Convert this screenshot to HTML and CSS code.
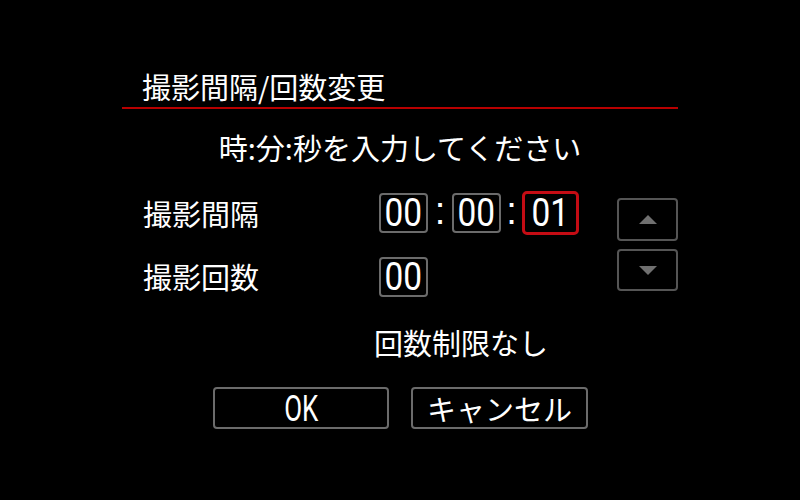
FILE: index.html
```html
<!DOCTYPE html>
<html lang="ja">
<head>
<meta charset="utf-8">
<title>撮影間隔/回数変更</title>
<link rel="stylesheet" href="styles.css">
</head>
<body>
<div class="screen">
  <div class="panel">
    <div class="title">撮影間隔/回数変更</div>
    <div class="prompt">時:分:秒を入力してください</div>
    <div class="form">
      <div class="label row1">撮影間隔</div>
      <div class="fields row1">
        <span class="box"><span class="num">00</span></span>
        <span class="colon c1">:</span>
        <span class="box"><span class="num">00</span></span>
        <span class="colon c2">:</span>
        <span class="box active"><span class="num">01</span></span>
      </div>
      <div class="arrows">
        <div class="arrow up">
          <svg width="18" height="9" viewBox="0 0 18 9"><polygon points="9,0 18,9 0,9" fill="#707070"/></svg>
        </div>
        <div class="arrow down">
          <svg width="18" height="9" viewBox="0 0 18 9"><polygon points="0,0 18,0 9,9" fill="#707070"/></svg>
        </div>
      </div>
      <div class="label row2">撮影回数</div>
      <div class="fields row2">
        <span class="box"><span class="num">00</span></span>
      </div>
    </div>
    <div class="nolimit">回数制限なし</div>
    <div class="buttons">
      <div class="btn ok"><span class="oktext">OK</span></div>
      <div class="btn cancel">キャンセル</div>
    </div>
  </div>
</div>
</body>
</html>
```

FILE: styles.css
```css
html, body {
  margin: 0;
  padding: 0;
  background: #000;
}

.screen {
  width: 800px;
  height: 500px;
  background: #000;
  color: #fff;
  font-family: "Noto Sans CJK JP", "Noto Sans", sans-serif;
  font-size: 29px;
  overflow: hidden;
}

.panel {
  margin-left: 122px;
  width: 556px;
  padding-top: 66px;
}

.title {
  height: 41px;
  line-height: 41px;
  padding-left: 20px;
  border-bottom: 2px solid #b80000;
  white-space: nowrap;
}

.prompt {
  margin-top: 18px;
  height: 40px;
  line-height: 40px;
  text-align: center;
  white-space: nowrap;
}

.form {
  margin-top: 23px;
  padding-left: 21px;
  display: grid;
  grid-template-columns: 236px 238px 61px;
  grid-template-rows: 46px 41px;
  row-gap: 20px;
}

.label {
  grid-column: 1;
  display: flex;
  align-items: center;
  line-height: 1;
  white-space: nowrap;
}

.label.row1 { grid-row: 1; }
.label.row2 { grid-row: 2; }

.fields {
  grid-column: 2;
  display: flex;
  align-items: center;
}

.fields.row1 { grid-row: 1; }
.fields.row2 { grid-row: 2; }

.box {
  box-sizing: border-box;
  width: 49px;
  height: 40px;
  border: 2px solid #6b6b6b;
  border-radius: 4px;
  display: flex;
  align-items: center;
  justify-content: center;
}

.box.active {
  width: 57px;
  height: 44px;
  border: 3px solid #c40c14;
  border-radius: 5px;
}

.num {
  display: inline-block;
  font-family: Roboto, "Liberation Sans", sans-serif;
  font-weight: 400;
  font-size: 38px;
  line-height: 1;
  transform: scaleX(0.88);
}

.colon {
  display: flex;
  justify-content: center;
  font-family: "Liberation Sans", Arial, sans-serif;
  font-size: 38px;
  line-height: 1;
  padding-bottom: 4px;
}

.colon.c1 { width: 24px; }
.colon.c2 { width: 21px; }

.arrows {
  grid-column: 3;
  grid-row: 1 / span 2;
  padding-top: 8px;
  display: flex;
  flex-direction: column;
  gap: 8px;
}

.arrow {
  box-sizing: border-box;
  width: 61px;
  height: 43px;
  border: 2px solid #555;
  border-radius: 4px;
  display: flex;
  align-items: center;
  justify-content: center;
}

.arrow.down {
  height: 42px;
}

.arrow svg {
  display: block;
}

.nolimit {
  margin-top: 25px;
  height: 40px;
  line-height: 40px;
  padding-left: 252px;
  white-space: nowrap;
}

.buttons {
  margin-top: 25px;
  display: flex;
  justify-content: center;
  gap: 22px;
  padding-left: 1px;
}

.btn {
  box-sizing: border-box;
  height: 42px;
  border: 2px solid #6b6b6b;
  border-radius: 4px;
  display: flex;
  align-items: center;
  justify-content: center;
  line-height: 1;
  white-space: nowrap;
}

.btn.ok { width: 176px; }
.btn.cancel { width: 177px; }

.oktext {
  display: inline-block;
  font-family: Roboto, "Liberation Sans", sans-serif;
  font-weight: 400;
  font-size: 37px;
  line-height: 1;
  transform: scaleX(0.7);
}
```
